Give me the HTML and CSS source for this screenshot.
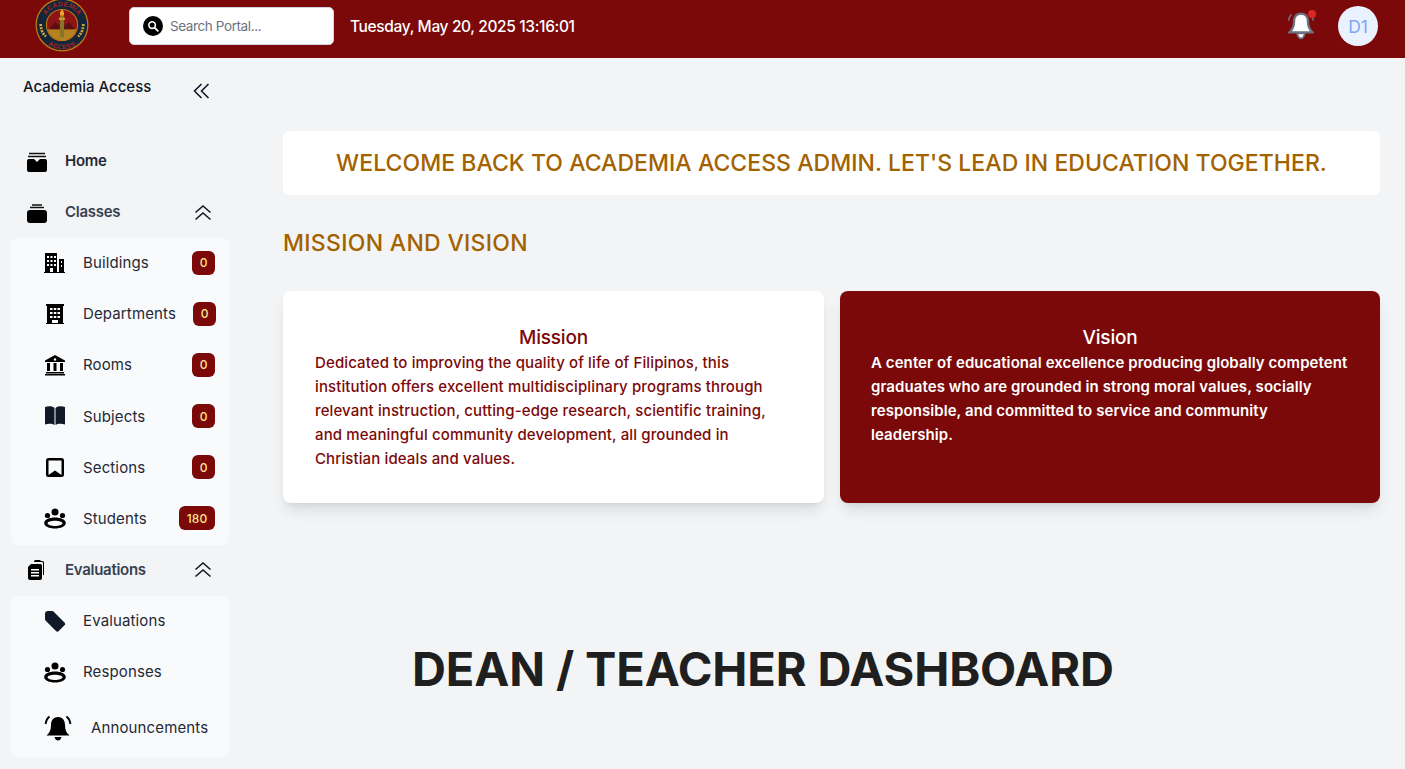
FILE: index.html
```html
<!DOCTYPE html>
<html lang="en">
<head>
<meta charset="utf-8">
<title>Academia Access</title>
<link rel="stylesheet" href="styles.css">
</head>
<body>
<header class="topbar">
  <svg class="logo" viewBox="0 0 52 52" aria-label="Academia Access logo">
    <circle cx="26" cy="26" r="25.500" fill="#c77a12"/>
    <circle cx="26" cy="26" r="24.300" fill="#14263a"/>
    <circle cx="26" cy="26" r="15.500" fill="#c77a12"/>
    <circle cx="26" cy="26" r="14.500" fill="#8c1414"/>
    <path d="M12 30h28a14.500 14.500 0 0 1-28 0z" fill="#b58320"/>
    <path d="M14 30l5-7 4 3h6l4-3 5 7z" fill="#5a1010"/>
    <rect x="24" y="17" width="4" height="21" fill="#8a7426"/>
    <rect x="23" y="19" width="6" height="2" fill="#d39a2a"/>
    <path d="M26 11c2 2 2.500 4 1.500 6h-3c-1-2-.5-4 1.500-6z" fill="#e8a92c"/>
    <path d="M5.500 25c0 5 1.500 9 5 12M46.500 25c0 5-1.500 9-5 12" fill="none" stroke="#d3a53a" stroke-width="2.600" stroke-dasharray="2 1"/>
    <defs>
      <path id="arc-top" d="M8 26a18 18 0 0 1 36 0"/>
      <path id="arc-bot" d="M2.500 26a23.500 23.500 0 0 0 47 0"/>
    </defs>
    <text class="logo-text"><textPath href="#arc-top" startOffset="50%" text-anchor="middle">ACADEMIA</textPath></text>
    <text class="logo-text"><textPath href="#arc-bot" startOffset="50%" text-anchor="middle">ACCESS</textPath></text>
  </svg>
  <div class="search">
    <span class="search-icon">
      <svg viewBox="0 0 20 20" width="12" height="12"><circle cx="8.500" cy="8.500" r="5.500" fill="none" stroke="#fff" stroke-width="2.600"/><path d="M13 13l5 5" stroke="#fff" stroke-width="3" stroke-linecap="round"/></svg>
    </span>
    <span class="search-text">Search Portal...</span>
  </div>
  <div class="clock">Tuesday, May 20, 2025 13:16:01</div>
  <div class="top-right">
    <span class="bell">
      <svg viewBox="0 0 28 28" width="30" height="30"><path d="M14 2.500c-4.500 0-6.500 3.500-6.500 7.500 0 4.500-1.500 7.500-4.500 10h22c-3-2.500-4.500-5.500-4.500-10 0-4-2-7.500-6.500-7.500z" fill="#fff" stroke="#6b7280" stroke-width="2.200" stroke-linejoin="round"/><path d="M10.500 21c.5 3 2 4.500 3.500 4.500s3-1.500 3.500-4.500z" fill="#fff" stroke="#6b7280" stroke-width="1.500"/><path d="M2.500 9c.3-2.500 1-4.500 2.500-6M25.500 9c-.3-2.500-1-4.500-2.500-6" stroke="#6b7280" fill="none" stroke-width="1.500"/></svg>
      <span class="dot"></span>
    </span>
    <span class="avatar">D1</span>
  </div>
</header>
<div class="shell">
  <aside class="sidebar">
    <div class="brand">
      <span class="brand-name">Academia Access</span>
      <svg class="chev-left" viewBox="0 0 20 20" width="20" height="20"><path d="M9.500 3L2.500 10l7 7M16.500 3L9.500 10l7 7" fill="none" stroke="#111827" stroke-width="1.600"/></svg>
    </div>
    <nav class="nav">
      <a class="top-item home">
        <svg class="ti" viewBox="0 0 22 22"><path d="M3 2.500h16M2 5.500h18" stroke="#111" stroke-width="1.300"/><path d="M3 8h5l3 3 3-3h5a2 2 0 0 1 2 2v9a2 2 0 0 1-2 2H3a2 2 0 0 1-2-2v-9a2 2 0 0 1 2-2z" fill="#000"/></svg>
        <span>Home</span>
      </a>
      <a class="top-item group">
        <svg class="ti" viewBox="0 0 22 22"><path d="M6 3h10M4 5.500h14" stroke="#111" stroke-width="1.400"/><rect x="1" y="8" width="20" height="13" rx="3" fill="#000"/></svg>
        <span class="grow">Classes</span>
        <svg class="chev-up" viewBox="0 0 20 20" width="20" height="20"><path d="M2.500 9.500L10 3l7.500 6.500M2.500 16.500L10 10l7.500 6.500" fill="none" stroke="#111827" stroke-width="1.600"/></svg>
      </a>
      <div class="sub">
        <a class="sub-item">
          <svg class="si" viewBox="0 0 22 22"><path d="M0 20h21v1H0z" fill="#000"/><path d="M1 1h12v19H9v-4H6v4H1z" fill="#000"/><path d="M15 7h5v13h-5z" fill="#000"/><path d="M3 4h2v2H3zM6.500 4h2v2h-2zM10 4h2v2h-2zM3 8h2v2H3zM6.500 8h2v2h-2zM10 8h2v2h-2zM3 12h2v2H3zM6.500 12h2v2h-2zM10 12h2v2h-2zM17 9h1v2h-1zM17 13h1v2h-1z" fill="#fff"/></svg>
          <span class="grow">Buildings</span><span class="badge">0</span>
        </a>
        <a class="sub-item">
          <svg class="si" viewBox="0 0 22 22"><path d="M2 1h18v2h-1v17h1v1H2v-1h1V3H2z" fill="#000"/><path d="M6 5h2.500v2H6zM9.800 5h2.500v2H9.800zM13.500 5H16v2h-2.500zM6 9h2.500v2H6zM9.800 9h2.500v2H9.800zM13.500 9H16v2h-2.500zM6 13h2.500v2H6zM9.800 13h2.500v2H9.800zM13.500 13H16v2h-2.500zM8 17h6v3H8z" fill="#fff"/></svg>
          <span class="grow">Departments</span><span class="badge shift">0</span>
        </a>
        <a class="sub-item">
          <svg class="si" viewBox="0 0 22 22"><path d="M11 1l10 5.500V8H1V6.500z" fill="#000"/><path d="M3 9h3v8H3zM9.500 9h3v8h-3zM16 9h3v8h-3zM2 18h18v1.500H2zM1 20h20v1.500H1z" fill="#000"/><circle cx="11" cy="5.500" r="1.200" fill="#fff"/></svg>
          <span class="grow">Rooms</span><span class="badge">0</span>
        </a>
        <a class="sub-item">
          <svg class="si" viewBox="0 0 22 22"><path d="M1 2c3-1 8-1 9.500 1v17c-2-1.500-6.500-1.500-9.500-.5zM21 2c-3-1-8-1-9.500 1v17c2-1.500 6.500-1.500 9.500-.5z" fill="#111827"/></svg>
          <span class="grow">Subjects</span><span class="badge">0</span>
        </a>
        <a class="sub-item">
          <svg class="si" viewBox="0 0 22 22"><path fill-rule="evenodd" d="M4.500 2h13A2.500 2.500 0 0 1 20 4.500v14a2.500 2.500 0 0 1-2.500 2.500h-13A2.500 2.500 0 0 1 2 18.500v-14A2.500 2.500 0 0 1 4.500 2zM4.500 4.500V19l6.500-4.500L17.500 19V4.500z" fill="#000"/></svg>
          <span class="grow">Sections</span><span class="badge">0</span>
        </a>
        <a class="sub-item">
          <svg class="si" viewBox="0 0 22 22"><use href="#people"/></svg>
          <span class="grow">Students</span><span class="badge wide">180</span>
        </a>
      </div>
      <a class="top-item group">
        <svg class="ti" viewBox="0 0 22 22"><path d="M8 3V2.500A1.500 1.500 0 0 1 9.500 1H14l1 1h1.500A1.500 1.500 0 0 1 18 3.500V16h-1V4a1 1 0 0 0-1-1z" fill="#000"/><path d="M5 5h1.500 8A1.500 1.500 0 0 1 16 6.500V19a2 2 0 0 1-2 2H4a2 2 0 0 1-2-2V8z" fill="#000"/><path d="M5 10h8v1.500H5zM5 13h8v1.500H5zM5 16h8v1.500H5z" fill="#fff"/></svg>
        <span class="grow">Evaluations</span>
        <svg class="chev-up" viewBox="0 0 20 20" width="20" height="20"><path d="M2.500 9.500L10 3l7.500 6.500M2.500 16.500L10 10l7.500 6.500" fill="none" stroke="#111827" stroke-width="1.600"/></svg>
      </a>
      <div class="sub">
        <a class="sub-item">
          <svg class="si" viewBox="0 0 22 22"><path d="M1 4a3 3 0 0 1 3-3h4a3 3 0 0 1 2 1l10.500 10.500a2 2 0 0 1 0 2.800l-5.700 5.700a2 2 0 0 1-2.800 0L1.500 10.500A3 3 0 0 1 1 9z" fill="#111827"/></svg>
          <span class="grow">Evaluations</span>
        </a>
        <a class="sub-item">
          <svg class="si" viewBox="0 0 22 22"><use href="#people"/></svg>
          <span class="grow">Responses</span>
        </a>
        <a class="sub-item last">
          <svg class="si big" viewBox="0 0 28 28"><path d="M14 3c-5 0-7 4-7 8 0 5-1.500 8-4.500 10.500h23C22.500 19 21 16 21 11c0-4-2-8-7-8z" fill="#000"/><path d="M10.500 23c.5 2.500 2 3.500 3.500 3.500s3-1 3.500-3.500z" fill="#000"/><path d="M1.500 10C2 6.500 3.500 4 5.500 2.500M26.500 10C26 6.500 24.500 4 22.500 2.500" fill="none" stroke="#000" stroke-width="1.800"/></svg>
          <span class="grow">Announcements</span>
        </a>
      </div>
    </nav>
  </aside>
  <main class="main">
    <div class="welcome">WELCOME BACK TO ACADEMIA ACCESS ADMIN. LET'S LEAD IN EDUCATION TOGETHER.</div>
    <h2 class="section-title">MISSION AND VISION</h2>
    <div class="cards">
      <section class="card light">
        <h3>Mission</h3>
        <p>Dedicated to improving the quality of life of Filipinos, this institution offers excellent multidisciplinary programs through relevant instruction, cutting-edge research, scientific training, and meaningful community development, all grounded in Christian ideals and values.</p>
      </section>
      <section class="card dark">
        <h3>Vision</h3>
        <p>A center of educational excellence producing globally competent graduates who are grounded in strong moral values, socially responsible, and committed to service and community leadership.</p>
      </section>
    </div>
    <h1 class="dash-title">DEAN / TEACHER DASHBOARD</h1>
  </main>
</div>
<svg class="defs" width="0" height="0">
  <symbol id="people" viewBox="0 0 22 22">
    <circle cx="11" cy="5" r="3.500" fill="#000"/><circle cx="3.500" cy="8.500" r="2.600" fill="#000"/><circle cx="18.500" cy="8.500" r="2.600" fill="#000"/>
    <path fill-rule="evenodd" d="M11 10.500c5.800 0 10.800 2.200 10.800 5.500s-5 5.500-10.800 5.500S.2 19.300.2 16s5-5.500 10.800-5.500zm0 3.200c-3.800 0-7.500 1-7.500 2.500s3.700 2.800 7.500 2.800 7.500-1.300 7.500-2.800-3.700-2.500-7.500-2.500z" fill="#000"/>
  </symbol>
</svg>
</body>
</html>
```
FILE: styles.css
```css
* { box-sizing: border-box; }
html, body { margin: 0; height: 769px; overflow: hidden; }
body { background: #f3f4f6; font-family: "Inter", "Liberation Sans", sans-serif; color: #1f2937; }
.defs { position: absolute; }

.topbar { height: 58px; background: #7b0909; display: flex; align-items: center; padding: 0 27px 0 35px; }
.logo { width: 54px; height: 54px; margin-top: -8px; flex: none; }
.logo-text { font-family: "Liberation Sans", sans-serif; font-size: 6.500px; font-weight: 700; fill: #a81f1f; letter-spacing: .3px; }
.search { width: 205px; height: 38px; margin-left: 40px; background: #fff; border-radius: 5px; border: 1px solid #d1d5db; display: flex; align-items: center; padding-left: 13px; gap: 7px; margin-top: -6px; }
.search-icon { width: 20px; height: 20px; border-radius: 50%; background: #000; display: flex; align-items: center; justify-content: center; }
.search-text { font-size: 13.500px; color: #6b7280; letter-spacing: -.4px; }
.clock { margin-left: 16px; color: #fff; font-size: 15.500px; font-weight: 500; letter-spacing: -.36px; margin-top: -6px; }
.top-right { margin-left: auto; display: flex; align-items: center; gap: 22px; margin-top: -6px; }
.bell { position: relative; width: 30px; height: 30px; }
.bell svg { display: block; }
.dot { position: absolute; top: -1px; right: 0; width: 8px; height: 8px; border-radius: 50%; background: #dc2626; }
.avatar { width: 40px; height: 40px; border-radius: 50%; background: #eaf1ff; color: #7fa6f5; font-size: 17.500px; display: flex; align-items: center; justify-content: center; }

.shell { display: flex; height: 711px; }
.sidebar { width: 240px; flex: none; padding: 0 11px; }
.brand { height: 78px; display: flex; align-items: flex-start; padding: 19px 0 0 12px; }
.brand-name { font-size: 15px; font-weight: 500; color: #111827; letter-spacing: 0; width: 169px; flex: none; }
.chev-left { margin-top: 4px; }
.nav { display: flex; flex-direction: column; }
a { display: flex; align-items: center; }
.top-item { height: 51px; padding-left: 15px; font-size: 15px; font-weight: 600; letter-spacing: -.28px; color: #374151; flex: none; }
.top-item span { margin-bottom: 2px; }
.home { color: #1f2937; }
.ti { width: 22px; height: 22px; margin-right: 17px; flex: none; }
.grow { flex: 1; }
.chev-up { margin-right: 16px; }
.sub { width: 218px; background: #f9fafb; border-radius: 6px; padding: 0 14px 0 33px; }
.sub-item { height: 51.170px; padding-bottom: 2px; font-size: 15px; letter-spacing: .13px; color: #1f2937; }
.si { width: 22px; height: 22px; margin-right: 17px; flex: none; }
.si.big { width: 28px; height: 28px; margin: 0 19px 0 0; }
.sub-item.last { height: 59px; padding: 0; }
.badge { width: 23px; height: 24px; background: #7b0909; color: #fde68a; border-radius: 6px; font-size: 12px; font-weight: 500; letter-spacing: 0; display: flex; align-items: center; justify-content: center; flex: none; }
.badge.wide { width: 36px; }
.shift { margin-right: -1px; }

.main { flex: 1; padding: 73px 25px 0 43px; display: flex; flex-direction: column; min-width: 0; }
.welcome { height: 64px; background: #fff; border-radius: 6px; display: flex; align-items: center; justify-content: center; color: #a36200; font-size: 23px; font-weight: 550; letter-spacing: .05px; white-space: nowrap; }
.section-title { margin: 33px 0 33px; height: 30px; line-height: 30px; color: #a36200; font-size: 23px; font-weight: 550; letter-spacing: .3px; }
.cards { display: grid; grid-template-columns: 541px 540px; gap: 16px; }
.card { height: 212px; border-radius: 8px; padding: 32px; box-shadow: 0 10px 15px -3px rgba(0,0,0,.1), 0 4px 6px -4px rgba(0,0,0,.1); }
.card h3 { margin: 1px 0 -1px; font-size: 19px; line-height: 28px; font-weight: 500; text-align: center; letter-spacing: -.2px; }
.card p { margin: 0; font-size: 15px; line-height: 24px; font-weight: 500; letter-spacing: .12px; }
.dark p { margin-left: -1px; font-weight: 600; letter-spacing: .08px; }
.light { background: #fff; color: #7b0909; }
.dark { background: #7b0909; color: #fff; }
.dash-title { margin: 138px 0 0 129px; font-size: 47px; line-height: 56px; font-weight: 700; color: #1f1f1f; letter-spacing: -.13px; white-space: nowrap; }
```
